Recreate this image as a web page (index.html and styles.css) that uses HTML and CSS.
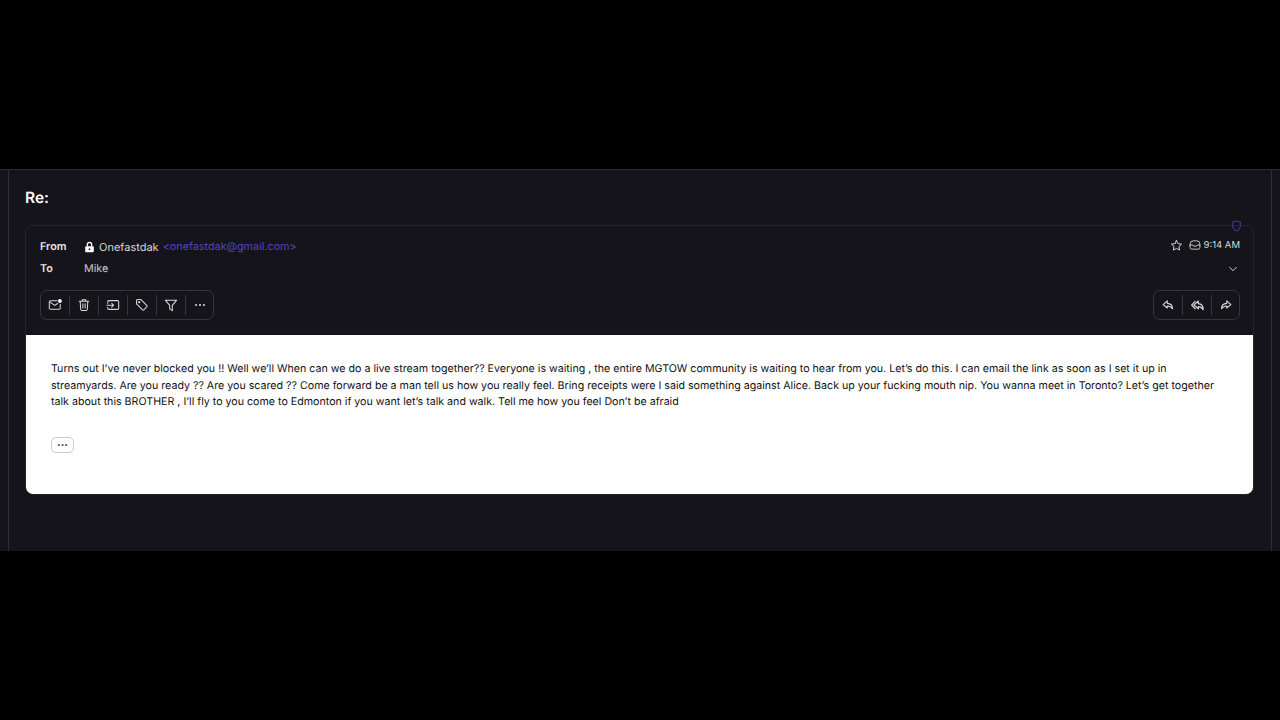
FILE: index.html
```html
<!DOCTYPE html>
<html lang="en">
<head>
    <meta charset="UTF-8">
    <meta name="viewport" content="width=device-width, initial-scale=1.0">
    <title>Re:</title>
    <link rel="stylesheet" href="styles.css">
</head>
<body>
    <div class="app">
        <div class="side-strip"></div>
        <main class="conversation">
            <h1 class="subject">Re:</h1>
            <article class="message">
                <svg class="shield" viewBox="0 0 12 14" width="11" height="12" fill="none" stroke="currentColor" stroke-width="1.2"><path d="M6 1 L10.500 2.600 V6.500 C10.500 9.500 8.500 11.800 6 13 C3.500 11.800 1.500 9.500 1.500 6.500 V2.600 Z"/></svg>
                <header class="message-head">
                    <div class="head-rows">
                        <div class="head-row">
                            <strong class="head-label">From</strong>
                            <span class="sender">
                                <svg class="lock" viewBox="0 0 12 14" width="11" height="12"><path fill="currentColor" d="M2 6h8a1 1 0 0 1 1 1v5a1 1 0 0 1-1 1H2a1 1 0 0 1-1-1V7a1 1 0 0 1 1-1Z"/><path fill="none" stroke="currentColor" stroke-width="1.500" d="M3.500 6.500V4a2.500 2.500 0 0 1 5 0v2.500"/><circle cx="6" cy="9.500" r="1" fill="#15141a"/></svg>
                                Onefastdak <span class="sender-mail">&lt;onefastdak@gmail.com&gt;</span>
                            </span>
                        </div>
                        <div class="head-row">
                            <strong class="head-label">To</strong>
                            <span class="recipient">Mike</span>
                        </div>
                    </div>
                    <div class="head-meta">
                        <div class="meta-line">
                            <svg class="icon" viewBox="0 0 16 16" width="13" height="13"><path d="M8 1.800l1.900 3.900 4.300.6-3.100 3 .7 4.300L8 11.600l-3.800 2 .7-4.300-3.100-3 4.300-.6Z"/></svg>
                            <svg class="icon inbox" viewBox="0 0 16 16" width="12" height="12"><path d="M1.500 8V6.500A4 4 0 0 1 5.500 2.500h5a4 4 0 0 1 4 4V8"/><path d="M1.500 8h3.700l1 1.600h3.600l1-1.600h3.700v3.700a1.800 1.800 0 0 1-1.800 1.800H3.300a1.800 1.800 0 0 1-1.800-1.800Z"/></svg>
                            <time>9:14 AM</time>
                        </div>
                        <svg class="icon chevron" viewBox="0 0 12 12" width="10" height="10"><path d="M2 4l4 4 4-4"/></svg>
                    </div>
                </header>
                <div class="toolbar">
                    <div class="btn-group">
                        <button class="tool-btn"><svg class="icon" viewBox="0 0 16 16" width="14" height="14"><path d="M14 7.500v4.200a1.200 1.200 0 0 1-1.200 1.200H2.700a1.200 1.200 0 0 1-1.200-1.200V4.300a1.200 1.200 0 0 1 1.200-1.200h7.800"/><path d="M1.800 4.500 7.700 8.500 11 6.300"/><circle cx="13.600" cy="3.400" r="2.200" fill="#fff" stroke="none"/></svg></button>
                        <button class="tool-btn"><svg class="icon" viewBox="0 0 16 16" width="14" height="14"><path d="M2.500 3.800h11M6 3.500V2h4v1.500M3.700 4l.5 9a1.500 1.500 0 0 0 1.500 1.200h4.600a1.500 1.500 0 0 0 1.500-1.200l.5-9M6.700 6.500v5M9.300 6.500v5"/></svg></button>
                        <button class="tool-btn"><svg class="icon" viewBox="0 0 16 16" width="14" height="14"><path d="M2 6V4.200A1.200 1.200 0 0 1 3.200 3h10.100a1.200 1.200 0 0 1 1.200 1.200v7.600a1.200 1.200 0 0 1-1.200 1.200H3.200A1.200 1.200 0 0 1 2 11.800V10.500"/><path d="M1 8.200h7.500M6.500 6l2.200 2.200-2.200 2.200"/></svg></button>
                        <button class="tool-btn"><svg class="icon" viewBox="0 0 16 16" width="14" height="14"><path d="M1.800 2.800a1 1 0 0 1 1-1h4l6.800 6.800a1 1 0 0 1 0 1.400l-3.600 3.600a1 1 0 0 1-1.400 0L1.800 6.800Z"/><circle cx="4.800" cy="4.800" r=".7"/></svg></button>
                        <button class="tool-btn"><svg class="icon" viewBox="0 0 16 16" width="14" height="14"><path d="M1.500 2.500h13L9.500 8.500v6l-3-2v-4Z"/></svg></button>
                        <button class="tool-btn"><svg class="icon" viewBox="0 0 16 16" width="14" height="14"><circle cx="3.500" cy="8" r=".6"/><circle cx="8" cy="8" r=".6"/><circle cx="12.500" cy="8" r=".6"/></svg></button>
                    </div>
                    <div class="btn-group">
                        <button class="tool-btn"><svg class="icon thick" viewBox="0 0 16 16" width="12" height="12"><path d="M7 2.500 1.500 7.500 7 12V9.300c3 0 5 .7 7 3.700 0-4.500-2.500-7-7-7.200Z"/></svg></button>
                        <button class="tool-btn"><svg class="icon thick" viewBox="0 0 16 16" width="13" height="13"><path d="M5 3 .8 7.500 5 12M9 2.500 3.500 7.500 9 12V9.300c2.200 0 4 .7 6 3.700 0-4.500-1.800-7-6-7.200Z"/></svg></button>
                        <button class="tool-btn"><svg class="icon thick" viewBox="0 0 16 16" width="12" height="12"><path d="M9 2.500 14.500 7.500 9 12V9.300c-3 0-5 .7-7 3.700 0-4.500 2.500-7 7-7.200Z"/></svg></button>
                    </div>
                </div>
                <section class="message-body">
                    <p class="body-text">Turns out I’ve never blocked you !! Well we’ll When can we do a live stream together?? Everyone is waiting , the entire MGTOW community is waiting to hear from you. Let’s do this. I can email the link as soon as I set it up in streamyards. Are you ready ?? Are you scared ?? Come forward be a man tell us how you really feel. Bring receipts were I said something against Alice. Back up your fucking mouth nip. You wanna meet in Toronto? Let’s get together talk about this BROTHER , I’ll fly to you come to Edmonton if you want let’s talk and walk. Tell me how you feel Don’t be afraid</p>
                    <button class="more-btn">···</button>
                </section>
            </article>
        </main>
        <div class="side-strip right"></div>
    </div>
</body>
</html>
```

FILE: styles.css
```css
* {
    box-sizing: border-box;
}

body {
    margin: 0;
    height: 720px;
    background-color: #000;
    font-family: Inter, "Liberation Sans", sans-serif;
    text-rendering: geometricPrecision;
    overflow: hidden;
    padding-top: 169px;
}

.app {
    display: flex;
    height: 382px;
    background-color: #15141a;
    border-top: 1px solid #2e2d33;
}

.side-strip {
    width: 9px;
    border-right: 1px solid #2e2d33;
    flex: none;
}

.side-strip.right {
    border-right: none;
    border-left: 1px solid #2e2d33;
}

.conversation {
    flex: 1;
    padding: 0 17px 0 16px;
}

.subject {
    margin: 18px 0 18px;
    font-size: 15.500px;
    line-height: 19px;
    font-weight: 600;
    color: #fff;
}

.message {
    position: relative;
    border: 1px solid #25242a;
    border-radius: 8px;
    background-color: #15141a;
}

.shield {
    position: absolute;
    top: -6px;
    right: 11px;
    color: #40349c;
}

.message-head {
    display: flex;
    justify-content: space-between;
    padding: 10px 13px 0 14px;
}

.head-row {
    display: flex;
    align-items: center;
    height: 21.500px;
    font-size: 10.800px;
}

.head-label {
    width: 44px;
    font-weight: 600;
    color: #e6e6e6;
}

.sender {
    display: flex;
    align-items: center;
    gap: 4px;
    font-size: 11px;
    color: #d8d8d8;
}

.lock {
    color: #fff;
}

.sender-mail {
    font-size: 10.800px;
    color: #5443c0;
}

.recipient {
    color: #cacaca;
}

.head-meta {
    display: flex;
    flex-direction: column;
    align-items: flex-end;
    font-size: 9.500px;
    color: #d8d8d8;
}

.meta-line {
    display: flex;
    align-items: center;
    gap: 4px;
    height: 18px;
}

.inbox {
    margin-left: 2px;
    margin-right: -1px;
}

.chevron {
    margin: 10px 2px 0 0;
}

.icon {
    fill: none;
    stroke: #d8d8d8;
    stroke-width: 1.200;
    stroke-linecap: round;
    stroke-linejoin: round;
}

.thick {
    stroke-width: 1.500;
}

.toolbar {
    display: flex;
    justify-content: space-between;
    padding: 11px 13px 15px 14px;
}

.btn-group {
    display: flex;
    align-items: center;
    height: 30px;
    border: 1px solid #36353b;
    border-radius: 7px;
}

.tool-btn {
    display: flex;
    align-items: center;
    justify-content: center;
    width: 29px;
    height: 20px;
    padding: 0;
    background: none;
    border: none;
    border-left: 1px solid #36353b;
}

.tool-btn:first-child {
    width: 28px;
    border-left: none;
}

.tool-btn:last-child {
    width: 28px;
}

.message-body {
    height: 159px;
    padding: 26px 25px 0;
    background-color: #fff;
    border-radius: 0 0 7px 7px;
}

.body-text {
    margin: 0;
    font-size: 10.660px;
    line-height: 16.500px;
    color: #111;
}

.more-btn {
    display: block;
    width: 23px;
    height: 16px;
    margin-top: 26px;
    padding: 0;
    background-color: #fff;
    border: 1px solid #c9c9ce;
    border-radius: 5px;
    font-family: inherit;
    font-size: 11px;
    font-weight: 700;
    line-height: 14px;
    color: #111;
}
```
